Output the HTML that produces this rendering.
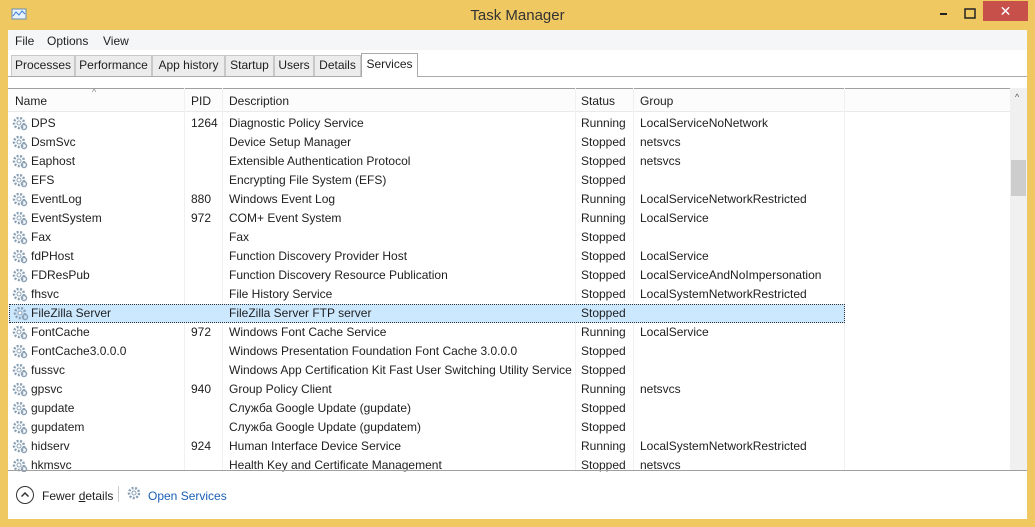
<!DOCTYPE html>
<html><head><style>
*{margin:0;padding:0;box-sizing:border-box}
body{width:1035px;height:527px;background:#f0c862;font-family:"Liberation Sans","Noto Sans CJK SC",sans-serif;font-size:12px;color:#1e1e1e;position:relative;overflow:hidden}
.title{position:absolute;left:0;top:0;width:1035px;height:30px;text-align:center;line-height:32px;font-size:15px;color:#333}
.client{position:absolute;left:8px;top:30px;width:1019px;height:489px;background:#fff}
.menu{position:absolute;left:0;top:0;width:1019px;height:20px;background:#f5f6f7}
.menu span{position:absolute;top:4px}
.tabs{position:absolute;left:0;top:23px;height:24px;width:1019px;border-bottom:1px solid #aaa}
.tab{position:absolute;top:2px;height:21px;background:#ececec;border:1px solid #c8c8c8;border-bottom:none;line-height:19px;text-align:center}
.tab.sel{top:0;height:24px;background:#fff;border-color:#aaa}
.hdr{position:absolute;top:58px;left:0;height:24px;width:1002px;border-top:1px solid #a0a0a0;border-bottom:1px solid #e8eaed;background:#fcfcfc}
.hdr span,.row span{position:absolute}
.hdr span{top:5px}
.sep{position:absolute;top:58px;width:1px;height:382px;background:#f0f0f0}
.row{position:absolute;left:0;width:1002px;height:19px;line-height:19px}
.row.sel{background:#cce8ff;outline:1px dotted #333;outline-offset:-1px;left:1px;width:836px;}
.row.sel span{margin-left:-1px}
.gear{position:absolute;left:4px;top:2px;width:16px;height:15px}
.sb{position:absolute;left:1002px;top:58px;width:17px;height:382px;background:#f0f0f0}
.foot{position:absolute;top:440px;left:0;width:1019px;border-top:1px solid #a0a0a0;height:49px}
</style></head><body>
<div class="title">Task Manager</div>
<svg style="position:absolute;left:10px;top:8px" width="18" height="14"><rect x="2" y="1" width="14" height="10" fill="#e8f2fb" stroke="#6a8caf"/><polyline points="3,8 6,4 9,7 12,3 15,6" fill="none" stroke="#3a7bd5"/></svg>
<svg style="position:absolute;left:937px;top:8px" width="90" height="14"><rect x="3" y="5" width="7" height="2" fill="#222"/><rect x="28" y="1" width="10" height="9" fill="none" stroke="#222" stroke-width="1.5"/></svg>
<div style="position:absolute;left:983px;top:1px;width:45px;height:20px;background:#c7504b;color:#fff;text-align:center;line-height:20px;font-size:14px">✕</div>
<div class="client">
<div class="menu"><span style="left:7px">File</span><span style="left:39px">Options</span><span style="left:95px">View</span></div>
<div class="tabs">
<div class="tab" style="left:3px;width:64px">Processes</div>
<div class="tab" style="left:67px;width:77px">Performance</div>
<div class="tab" style="left:144px;width:73px">App history</div>
<div class="tab" style="left:217px;width:49px">Startup</div>
<div class="tab" style="left:266px;width:40px">Users</div>
<div class="tab" style="left:306px;width:47px">Details</div>
<div class="tab sel" style="left:353px;width:57px;line-height:20px">Services</div>
</div>
<div class="hdr"><span style="left:7px">Name</span><span style="left:84px;top:-2px;color:#888;font-size:9px">^</span><span style="left:183px">PID</span><span style="left:221px">Description</span><span style="left:573px">Status</span><span style="left:632px">Group</span></div>
<div class="sep" style="left:176px"></div><div class="sep" style="left:214px"></div><div class="sep" style="left:567px"></div><div class="sep" style="left:625px"></div><div class="sep" style="left:836px"></div>
<div id="rows"></div>
<div class="sb"><div style="position:absolute;top:4px;left:5px;color:#555;font-size:9px">^</div><div style="position:absolute;top:72px;left:1px;width:15px;height:36px;background:#cdcdcd"></div></div>
<div class="foot">
<svg style="position:absolute;left:7px;top:14px" width="20" height="20"><circle cx="10" cy="10" r="8.5" fill="none" stroke="#333"/><polyline points="6.5,11.5 10,8 13.5,11.5" fill="none" stroke="#333" stroke-width="1.5"/></svg>
<span style="position:absolute;left:34px;top:18px">Fewer <u>d</u>etails</span>
<div style="position:absolute;left:110px;top:15px;width:1px;height:16px;background:#ccc"></div>
<svg style="position:absolute;left:119px;top:15px" width="16" height="16"><circle cx="7" cy="7" r="5" fill="none" stroke="#8aa0b5" stroke-width="2.5" stroke-dasharray="2 1.5"/><circle cx="7" cy="7" r="2" fill="#fff" stroke="#8aa0b5"/></svg>
<span style="position:absolute;left:140px;top:18px;color:#1a5fb4">Open Services</span>
</div>
</div>
<script>
const d=[["DPS","1264","Diagnostic Policy Service","Running","LocalServiceNoNetwork"],["DsmSvc","","Device Setup Manager","Stopped","netsvcs"],["Eaphost","","Extensible Authentication Protocol","Stopped","netsvcs"],["EFS","","Encrypting File System (EFS)","Stopped",""],["EventLog","880","Windows Event Log","Running","LocalServiceNetworkRestricted"],["EventSystem","972","COM+ Event System","Running","LocalService"],["Fax","","Fax","Stopped",""],["fdPHost","","Function Discovery Provider Host","Stopped","LocalService"],["FDResPub","","Function Discovery Resource Publication","Stopped","LocalServiceAndNoImpersonation"],["fhsvc","","File History Service","Stopped","LocalSystemNetworkRestricted"],["FileZilla Server","","FileZilla Server FTP server","Stopped",""],["FontCache","972","Windows Font Cache Service","Running","LocalService"],["FontCache3.0.0.0","","Windows Presentation Foundation Font Cache 3.0.0.0","Stopped",""],["fussvc","","Windows App Certification Kit Fast User Switching Utility Service","Stopped",""],["gpsvc","940","Group Policy Client","Running","netsvcs"],["gupdate","","Служба Google Update (gupdate)","Stopped",""],["gupdatem","","Служба Google Update (gupdatem)","Stopped",""],["hidserv","924","Human Interface Device Service","Running","LocalSystemNetworkRestricted"],["hkmsvc","","Health Key and Certificate Management","Stopped","netsvcs"]];
let h="";d.forEach((r,i)=>{const top=84+i*19;const sel=i==10;
h+=`<div class="row${sel?' sel':''}" style="top:${top}px;height:${i==18?16:19}px;overflow:hidden"><svg class="gear" viewBox="0 0 16 15"><circle cx="7" cy="7" r="5" fill="none" stroke="#8aa0b5" stroke-width="2.5" stroke-dasharray="2 1.5"/><circle cx="7" cy="7" r="2" fill="#fff" stroke="#8aa0b5"/><circle cx="12" cy="11" r="2.5" fill="none" stroke="#8aa0b5" stroke-width="1.5"/></svg><span style="left:23px">${r[0]}</span><span style="left:183px">${r[1]}</span><span style="left:221px">${r[2]}</span><span style="left:573px">${r[3]}</span><span style="left:632px">${r[4]}</span></div>`});
document.getElementById("rows").innerHTML=h;
</script>
</body></html>
